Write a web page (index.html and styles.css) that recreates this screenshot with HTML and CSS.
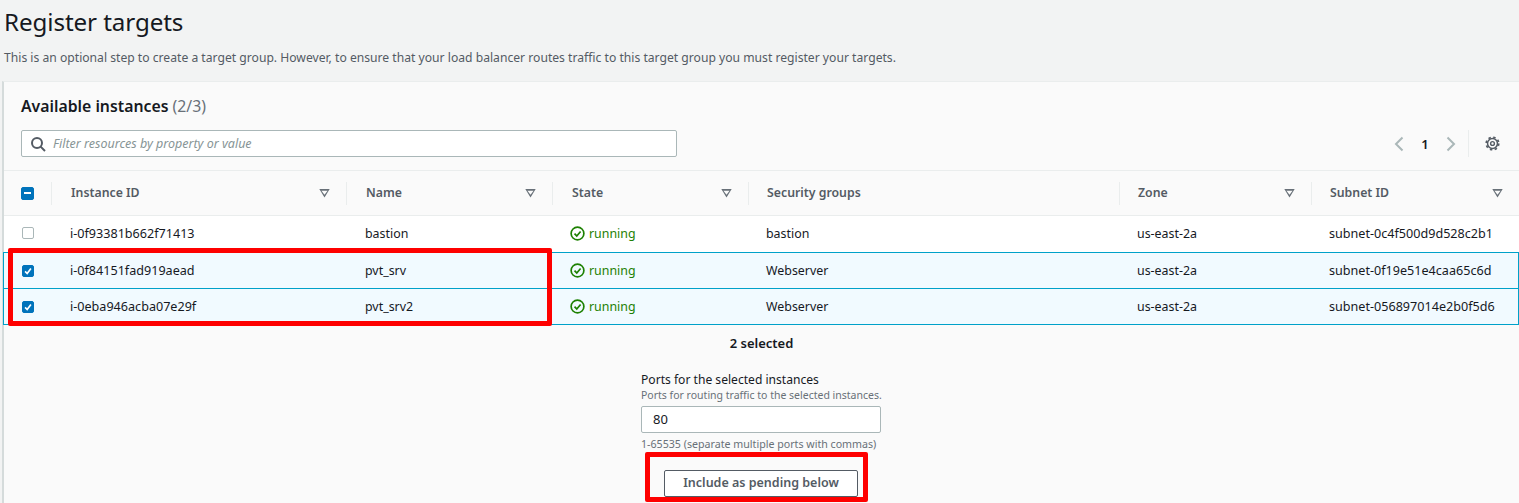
FILE: index.html
```html
<!DOCTYPE html>
<html lang="en">
<head>
<meta charset="utf-8">
<title>Register targets</title>
<link rel="stylesheet" href="styles.css">
</head>
<body>
<header class="page-head">
  <h1>Register targets</h1>
  <p>This is an optional step to create a target group. However, to ensure that your load balancer routes traffic to this target group you must register your targets.</p>
</header>
<main class="card">
  <div class="card-head">
    <h2>Available instances <span class="count">(2/3)</span></h2>
    <div class="tools">
      <label class="filter">
        <svg class="search" viewBox="0 0 16 16" width="16" height="16"><circle cx="7" cy="7" r="5" fill="none" stroke="#545b64" stroke-width="2"/><path d="M10.600 10.600 15 15" stroke="#545b64" stroke-width="2" fill="none"/></svg>
        <span>Filter resources by property or value</span>
      </label>
      <div class="pager">
        <svg viewBox="0 0 10 16" width="10" height="16"><path d="M8.500 1.500 2 8l6.500 6.500" fill="none" stroke="#aab7b8" stroke-width="2"/></svg>
        <b>1</b>
        <svg viewBox="0 0 10 16" width="10" height="16"><path d="M1.500 1.500 8 8l-6.500 6.500" fill="none" stroke="#aab7b8" stroke-width="2"/></svg>
        <i class="pager-sep"></i>
        <svg class="gear" viewBox="0 0 16 16" width="15" height="15"><circle cx="8" cy="8" r="5.300" fill="none" stroke="#545b64" stroke-width="1.600"/><circle cx="8" cy="8" r="6.700" fill="none" stroke="#545b64" stroke-width="1.800" stroke-dasharray="2.600 2.660"/><circle cx="8" cy="8" r="2" fill="none" stroke="#545b64" stroke-width="1.500"/></svg>
      </div>
    </div>
  </div>

  <div class="row heads">
    <div class="cell first"><span class="box on"><i class="dash"></i></span></div>
    <div class="cell">Instance ID<i class="caret"></i></div>
    <div class="cell">Name<i class="caret"></i></div>
    <div class="cell">State<i class="caret"></i></div>
    <div class="cell">Security groups</div>
    <div class="cell">Zone<i class="caret"></i></div>
    <div class="cell">Subnet ID<i class="caret"></i></div>
  </div>

  <div class="row item">
    <div class="cell first"><span class="box"></span></div>
    <div class="cell id">i-0f93381b662f71413</div>
    <div class="cell">bastion</div>
    <div class="cell running"><svg viewBox="0 0 16 16" width="15" height="15"><circle cx="8" cy="8" r="6.800" fill="none" stroke="#1d8102" stroke-width="1.800"/><path d="M4.800 8.200 7.200 10.600 11.300 5.800" fill="none" stroke="#1d8102" stroke-width="1.800"/></svg>running</div>
    <div class="cell">bastion</div>
    <div class="cell">us-east-2a</div>
    <div class="cell id">subnet-0c4f500d9d528c2b1</div>
  </div>
  <div class="row item selected">
    <div class="cell first"><span class="box on"><svg viewBox="0 0 12 12" width="12" height="12"><path d="M2.500 6.500 5 9l4.500-6" fill="none" stroke="#fff" stroke-width="2"/></svg></span></div>
    <div class="cell id">i-0f84151fad919aead</div>
    <div class="cell">pvt_srv</div>
    <div class="cell running"><svg viewBox="0 0 16 16" width="15" height="15"><circle cx="8" cy="8" r="6.800" fill="none" stroke="#1d8102" stroke-width="1.800"/><path d="M4.800 8.200 7.200 10.600 11.300 5.800" fill="none" stroke="#1d8102" stroke-width="1.800"/></svg>running</div>
    <div class="cell">Webserver</div>
    <div class="cell">us-east-2a</div>
    <div class="cell id">subnet-0f19e51e4caa65c6d</div>
  </div>
  <div class="row item selected">
    <div class="cell first"><span class="box on"><svg viewBox="0 0 12 12" width="12" height="12"><path d="M2.500 6.500 5 9l4.500-6" fill="none" stroke="#fff" stroke-width="2"/></svg></span></div>
    <div class="cell id">i-0eba946acba07e29f</div>
    <div class="cell">pvt_srv2</div>
    <div class="cell running"><svg viewBox="0 0 16 16" width="15" height="15"><circle cx="8" cy="8" r="6.800" fill="none" stroke="#1d8102" stroke-width="1.800"/><path d="M4.800 8.200 7.200 10.600 11.300 5.800" fill="none" stroke="#1d8102" stroke-width="1.800"/></svg>running</div>
    <div class="cell">Webserver</div>
    <div class="cell">us-east-2a</div>
    <div class="cell id">subnet-056897014e2b0f5d6</div>
  </div>

  <section class="ports">
    <div class="selected-count">2 selected</div>
    <div class="form">
      <div class="form-label">Ports for the selected instances</div>
      <div class="form-desc">Ports for routing traffic to the selected instances.</div>
      <div class="input">80</div>
      <div class="form-hint">1-65535 (separate multiple ports with commas)</div>
      <div class="btn">Include as pending below</div>
    </div>
  </section>

  <div class="mark mark-rows"></div>
  <div class="mark mark-btn"></div>
</main>
</body>
</html>
```
FILE: styles.css
```css
* { box-sizing: border-box; }
html, body { height: 503px; overflow: hidden; }
body {
  margin: 0;
  background: #f2f3f3;
  color: #16191f;
  font-family: "Noto Sans", "Open Sans", sans-serif;
  font-size: 13px;
}
.page-head { height: 81px; padding: 5px 0 0 4px; }
h1 { margin: 0; font-size: 24.200px; font-weight: 400; line-height: 34px; letter-spacing: -.1px; }
.page-head p { margin: 10px 0 0; font-size: 12.150px; line-height: 18px; color: #545b64; }
.card {
  position: relative;
  height: 422px;
  margin-left: 2px;
  background: #fafafa;
  border-top: 1px solid #eaeded;
  border-left: 2px solid #d5dbdb;
}
.card-head { height: 89px; padding: 14px 0 0 17px; border-bottom: 1px solid #eaeded; }
h2 { margin: 0; font-size: 15.800px; font-weight: 600; line-height: 20px; }
.count { font-weight: 400; color: #687078; }
.tools { display: flex; align-items: center; justify-content: space-between; margin-top: 14px; }
.filter {
  display: flex; align-items: center; gap: 7px;
  width: 656px; height: 27px; padding-left: 8px;
  background: #fff; border: 1px solid #aab7b8; border-radius: 2px;
  font-style: italic; font-size: 12.500px; color: #879596;
}
.pager { display: flex; align-items: center; height: 27px; margin-right: 19px; }
.pager b { width: 42px; text-align: center; font-weight: 600; font-size: 13px; }
.pager-sep { width: 1px; height: 27px; margin: 0 16px 0 12px; background: #eaeded; }
.gear { flex: none; }
.row {
  display: grid;
  grid-template-columns: 47px 295px 206px 196px 371px 192px 1fr;
  align-items: center;
}
.heads { height: 45px; border-bottom: 1px solid #eaeded; font-weight: 600; font-size: 12.300px; color: #545b64; }
.heads .cell {
  position: relative; height: 23px; line-height: 22px; padding-left: 19px;
  border-left: 1px solid #eaeded;
}
.heads .cell:nth-child(n+5) { padding-left: 18px; }
.heads .first { display: flex; align-items: center; border-left: 0; padding-left: 17px; }
.caret {
  position: absolute; right: 16px; top: 7px;
  width: 11px; height: 9px;
  background: #687078;
  clip-path: polygon(0 0, 100% 0, 50% 100%, 0 0, 22% 24%, 50% 70%, 78% 24%, 22% 24%);
}
.row:not(.heads) .cell { padding-left: 19px; white-space: nowrap; }
.row:not(.heads) .cell:nth-child(n+5) { padding-left: 18px; }
.row:not(.heads) .first { padding-left: 18px; }
.row:not(.heads) .running { padding-left: 18px; }
.item { height: 36px; padding-bottom: 2px; background: #fff; font-size: 12.400px; color: #16191f; }
.item .id { font-size: 12.600px; }
.item.selected {
  height: 37px;
  padding-bottom: 0;
  background: #f1faff;
  border: 1px solid #00a1c9;
  margin-left: -1px;
}
.item.selected + .item.selected { margin-top: -1px; }
.running { display: flex; align-items: center; gap: 4px; color: #1d8102; }
.box {
  display: flex; align-items: center; justify-content: center;
  width: 12px; height: 12px;
  background: #fff; border: 1px solid #aab7b8; border-radius: 2px;
}
.box.on { background: #0073bb; border-color: #0073bb; }
.heads .box { width: 13px; height: 13px; }
.dash { width: 7px; height: 2px; background: #fff; }
.ports { display: flex; flex-direction: column; align-items: center; }
.selected-count { margin-top: 9px; height: 18px; line-height: 18px; font-weight: 600; font-size: 13px; }
.form { width: 240px; margin: 19px 1px 0 0; }
.form-label { font-size: 12.100px; line-height: 17px; }
.form-desc { font-size: 10.500px; line-height: 15px; color: #687078; white-space: nowrap; }
.input {
  height: 27px; margin-top: 3px; padding-left: 11px;
  background: #fff; border: 1px solid #aab7b8; border-radius: 2px;
  line-height: 25px; font-size: 13px;
}
.form-hint { margin-top: 4px; font-size: 10.650px; line-height: 15px; color: #687078; white-space: nowrap; }
.btn {
  width: 194px; height: 27px; margin: 18px 0 0 23px;
  background: #fff; border: 1px solid #545b64; border-radius: 2px;
  text-align: center; line-height: 24px;
  font-weight: 600; font-size: 12.500px; color: #545b64;
}
.mark { position: absolute; border: 5px solid #fe0000; border-radius: 2px; pointer-events: none; }
.mark-rows { left: 4px; top: 166px; width: 544px; height: 78px; }
.mark-btn { left: 641px; top: 370px; width: 223px; height: 50px; }
```
